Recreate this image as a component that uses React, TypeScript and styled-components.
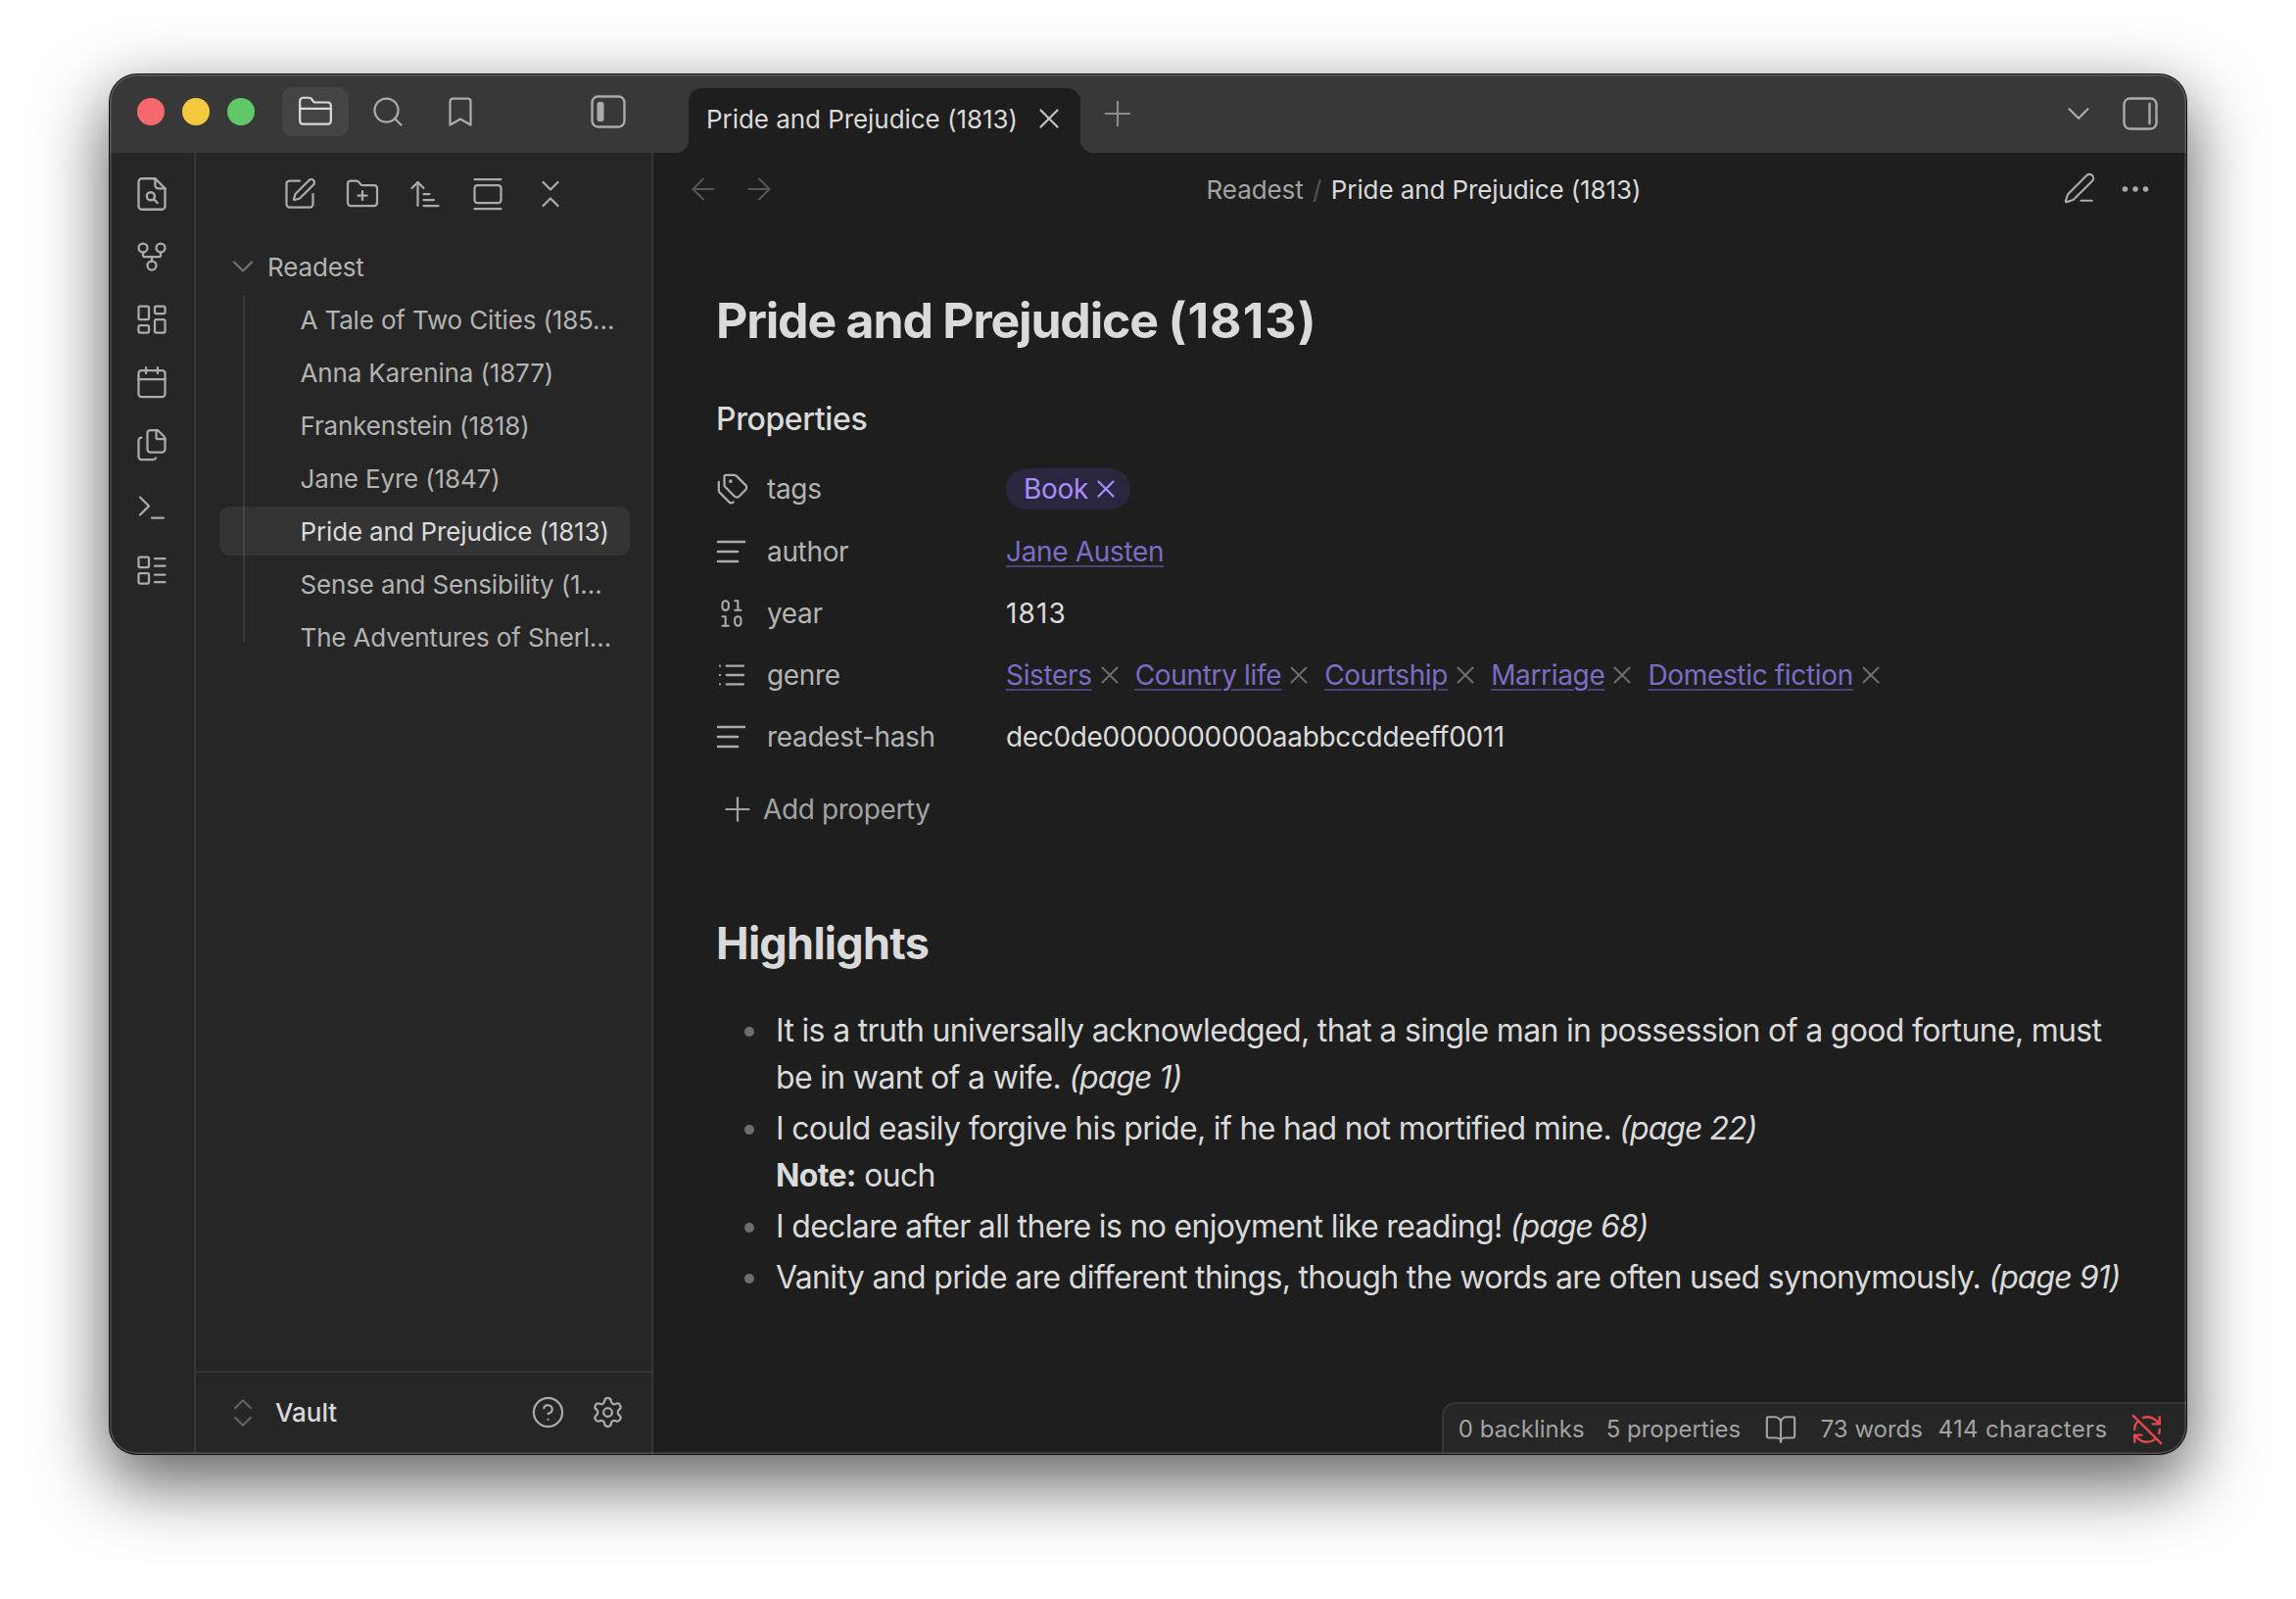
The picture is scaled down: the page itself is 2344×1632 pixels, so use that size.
import { Fragment } from 'react';
import styled, { createGlobalStyle } from 'styled-components';
import {
  ArrowLeft, ArrowRight, ArrowUpNarrowWide, Binary, BookOpen, Bookmark, Calendar, ChevronDown,
  ChevronsDownUp, ChevronsUpDown, CircleHelp, Ellipsis, Files, FolderClosed, FolderPlus,
  GalleryVertical, GitFork, LayoutDashboard, LayoutList, List, PenLine, Plus, RefreshCwOff,
  Search, Settings, SquarePen, Tags, Terminal, X,
} from 'lucide-react';

const GlobalStyle = createGlobalStyle`
  html, body { margin: 0; padding: 0; background: #fff; }
  body { font-family: Inter, "Liberation Sans", sans-serif; -webkit-font-smoothing: antialiased; }
  * { box-sizing: border-box; }
`;

const Stage = styled.div`
  width: 2344px;
  height: 1632px;
  padding: 76px 0 0 112px;
  overflow: hidden;
`;

const Window = styled.div`
  position: relative;
  width: 2120px;
  height: 1408px;
  display: flex;
  flex-direction: column;
  border-radius: 28px;
  overflow: hidden;
  background: #1e1e1e;
  box-shadow: 0 0 0 1px #111, 0 26px 70px 4px rgba(0, 0, 0, 0.62);

  &::after {
    content: '';
    position: absolute;
    inset: 0;
    border-radius: 28px;
    box-shadow: inset 0 0 0 1.5px rgba(255, 255, 255, 0.2);
    pointer-events: none;
  }
`;

const TitleBar = styled.div`
  height: 80px;
  flex: none;
  display: flex;
  align-items: center;
  background: #383838;
  color: #ababab;
`;

const Lights = styled.div`
  display: flex;
  gap: 18px;
  margin: 0 25px 4px 28px;
`;

const Light = styled.span<{ $color: string }>`
  width: 28px;
  height: 28px;
  border-radius: 50%;
  background: ${(p) => p.$color};
`;

const BarButton = styled.div<{ $active?: boolean }>`
  width: 68px;
  height: 50px;
  margin: 0 3px 4px;
  display: flex;
  align-items: center;
  justify-content: center;
  border-radius: 10px;
  color: ${(p) => (p.$active ? '#dadada' : '#ababab')};
  background: ${(p) => (p.$active ? '#444444' : 'transparent')};
`;

const ToggleButton = styled(BarButton)`
  margin-left: 80px;
`;

const Tab = styled.div`
  position: relative;
  align-self: flex-end;
  width: 400px;
  height: 66px;
  margin-left: 45px;
  padding: 0 18px 4px;
  display: flex;
  align-items: center;
  justify-content: space-between;
  background: #1e1e1e;
  border-radius: 14px 14px 0 0;
  color: #dadada;
  font-size: 26px;
  letter-spacing: -0.002em;
  white-space: nowrap;

  &::before,
  &::after {
    content: '';
    position: absolute;
    bottom: 0;
    width: 14px;
    height: 14px;
  }
  &::before {
    left: -14px;
    background: radial-gradient(circle at 0 0, #383838 14px, #1e1e1e 14.5px);
  }
  &::after {
    right: -14px;
    background: radial-gradient(circle at 100% 0, #383838 14px, #1e1e1e 14.5px);
  }
`;

const TabClose = styled.span`
  display: flex;
  color: #c4c4c4;
  margin-right: -3px;
`;

const NewTab = styled.div`
  margin: 0 0 0 17px;
  display: flex;
  width: 42px;
  justify-content: center;
  color: #8c8c8c;
`;

const BarRight = styled.div`
  margin-left: auto;
  margin-right: 29px;
  display: flex;
  align-items: center;
  gap: 26px;
`;

const Body = styled.div`
  flex: 1;
  min-height: 0;
  display: flex;
`;

const Ribbon = styled.div`
  width: 88px;
  flex: none;
  padding-top: 10px;
  display: flex;
  flex-direction: column;
  align-items: center;
  background: #262626;
  border-right: 2px solid #363636;
  color: #ababab;
`;

const RibbonSlot = styled.div`
  height: 64px;
  flex: none;
  display: flex;
  align-items: center;
  justify-content: center;
`;

const Sidebar = styled.div`
  width: 467px;
  flex: none;
  display: flex;
  flex-direction: column;
  background: #262626;
  border-right: 2px solid #363636;
`;

const SideTools = styled.div`
  height: 84px;
  flex: none;
  padding-left: 2px;
  display: flex;
  align-items: center;
  justify-content: center;
  color: #ababab;
`;

const SideTool = styled.div`
  width: 64px;
  display: flex;
  justify-content: center;
`;

const Tree = styled.div`
  padding: 7px 22px 0 24px;
  font-size: 26px;
  letter-spacing: -0.006em;
`;

const TreeFolder = styled.div`
  height: 50px;
  margin-bottom: 4px;
  display: flex;
  align-items: center;
  gap: 7px;
  padding-left: 6px;
  color: #b3b3b3;
`;

const FolderChevron = styled.span`
  display: flex;
  color: #6e6e6e;
`;

const TreeChildren = styled.div`
  position: relative;

  &::before {
    content: '';
    position: absolute;
    left: 24px;
    top: 0;
    bottom: 20px;
    width: 2px;
    background: rgba(255, 255, 255, 0.09);
  }
`;

const TreeItem = styled.div<{ $active?: boolean }>`
  height: 50px;
  margin-bottom: 4px;
  padding-left: 82.5px;
  display: flex;
  align-items: center;
  border-radius: 10px;
  white-space: nowrap;
  color: ${(p) => (p.$active ? '#dadada' : '#b3b3b3')};
  background: ${(p) => (p.$active ? '#343434' : 'transparent')};
`;

const VaultBar = styled.div`
  margin-top: auto;
  height: 85px;
  flex: none;
  padding: 0 14px 2px 29px;
  display: flex;
  align-items: center;
  border-top: 2px solid #363636;
  color: #ababab;
`;

const VaultChevrons = styled.span`
  display: flex;
  color: #626262;
`;

const VaultName = styled.span`
  margin: 0 auto 0 14px;
  font-size: 26px;
  font-weight: 500;
  color: #dadada;
`;

const VaultAction = styled.span`
  width: 61px;
  display: flex;
  justify-content: center;
`;

const Main = styled.div`
  flex: 1;
  min-width: 0;
  display: flex;
  flex-direction: column;
`;

const ViewHeader = styled.div`
  height: 74px;
  flex: none;
  display: grid;
  grid-template-columns: 1fr auto 1fr;
  align-items: center;
`;

const NavArrows = styled.div`
  padding-left: 22px;
  display: flex;
  color: #565656;
`;

const ViewActions = styled.div`
  padding-right: 24px;
  display: flex;
  justify-content: flex-end;
  color: #ababab;
`;

const HeaderSlot = styled.div`
  width: 57px;
  display: flex;
  justify-content: center;
`;

const Crumbs = styled.div`
  margin-left: 8px;
  display: flex;
  align-items: center;
  gap: 9.5px;
  font-size: 26px;
  letter-spacing: -0.004em;
  color: #dadada;
  white-space: nowrap;
`;

const CrumbParent = styled.span`
  color: #a3a3a3;
`;

const CrumbSep = styled.span`
  color: #555;
`;

const Note = styled.div`
  padding: 68px 65px 0 64px;
  color: #dadada;
`;

const NoteTitle = styled.h1`
  margin: 0;
  font-size: 50px;
  line-height: 58px;
  font-weight: 700;
  letter-spacing: -0.024em;
`;

const TitleYear = styled.span`
  letter-spacing: 0.022em;
`;

const PropsHeading = styled.div`
  margin: 52px 0 18.5px;
  font-size: 32px;
  line-height: 40px;
  font-weight: 500;
  letter-spacing: -0.012em;
`;

const PropRow = styled.div<{ $tall?: boolean }>`
  height: ${(p) => (p.$tall ? '65px' : '63px')};
  display: flex;
  align-items: center;
  font-size: 28px;
  letter-spacing: -0.012em;
`;

const PropIcon = styled.span`
  width: 52px;
  flex: none;
  display: flex;
  color: #ababab;
`;

const YearIcon = styled(Binary)`
  margin-left: -3px;
`;

const PropKey = styled.span`
  width: 244px;
  flex: none;
  color: #b3b3b3;
`;

const PropValue = styled.span`
  color: #dadada;
`;

const YearValue = styled(PropValue)`
  letter-spacing: 0.04em;
`;

const TagPill = styled.span`
  height: 42px;
  padding: 0 10px 0 18px;
  display: flex;
  align-items: center;
  gap: 3px;
  border-radius: 21px;
  background: #2a2640;
  color: #a88ef9;
`;

const ValueLinks = styled.div`
  display: flex;
  align-items: center;
`;

const InternalLink = styled.span`
  color: #7b6cc4;
  text-decoration: underline;
  text-decoration-color: #4b4279;
  text-decoration-thickness: 2px;
  text-underline-offset: 4px;
`;

const LinkRemove = styled.span`
  display: flex;
  width: 44px;
  padding-left: 3px;
  color: #6e6e6e;
`;

const AddProperty = styled.div`
  height: 84px;
  padding-left: 2px;
  display: flex;
  align-items: center;
  gap: 6px;
  font-size: 28px;
  letter-spacing: -0.014em;
  color: #a3a3a3;
`;

const Heading = styled.h2`
  margin: 70px 0 40px;
  font-size: 45px;
  line-height: 50px;
  font-weight: 700;
  letter-spacing: -0.016em;
`;

const Bullets = styled.ul`
  margin: 0;
  padding: 0;
  list-style: none;
`;

const BulletItem = styled.li`
  padding-left: 61px;
  margin-bottom: 4px;
  font-size: 32px;
  line-height: 48px;
  letter-spacing: -0.021em;

  &::before {
    content: '';
    display: inline-block;
    width: 10px;
    height: 10px;
    margin-left: -32px;
    margin-right: 22px;
    vertical-align: 5px;
    border-radius: 50%;
    background: #6e6e6e;
  }

  em { font-style: italic; letter-spacing: -0.03em; }
  strong { font-weight: 700; }
`;

const StatusBar = styled.div`
  position: absolute;
  right: 0;
  bottom: 0;
  height: 53px;
  padding: 0 23px 0 15px;
  display: flex;
  align-items: center;
  background: #262626;
  border: 2px solid #363636;
  border-width: 2px 0 0 2px;
  border-top-left-radius: 14px;
  font-size: 24px;
  color: #a3a3a3;
  white-space: nowrap;
`;

const StatusText = styled.span<{ $gap: number; $tracking?: string }>`
  margin-right: ${(p) => p.$gap}px;
  letter-spacing: ${(p) => p.$tracking ?? 'normal'};
`;

const StatusIcon = styled.span<{ $gap: number; $color?: string }>`
  display: flex;
  margin-right: ${(p) => p.$gap}px;
  color: ${(p) => p.$color ?? 'inherit'};
`;

const SidebarLeftIcon = () => (
  <svg width="36" height="34" viewBox="0 0 36 34" fill="none" stroke="currentColor" strokeWidth="2.4">
    <rect x="1.5" y="1.5" width="33" height="31" rx="6" />
    <rect x="6.5" y="7" width="7" height="20" rx="2.5" fill="currentColor" stroke="none" />
  </svg>
);

const SidebarRightIcon = () => (
  <svg width="36" height="34" viewBox="0 0 36 34" fill="none" stroke="currentColor" strokeWidth="2.4">
    <rect x="1.5" y="1.5" width="33" height="31" rx="6" />
    <line x1="27.5" y1="7" x2="27.5" y2="27" strokeLinecap="round" />
  </svg>
);

const FileSearchIcon = () => (
  <svg width="32" height="36" viewBox="0 0 28 32" fill="none" stroke="currentColor" strokeWidth="2.1" strokeLinejoin="round" strokeLinecap="round">
    <path d="M17 2H5a3 3 0 0 0-3 3v22a3 3 0 0 0 3 3h18a3 3 0 0 0 3-3V11z" />
    <path d="M17 2v6a3 3 0 0 0 3 3h6" />
    <circle cx="13" cy="18" r="3.6" />
    <path d="m16 21 3 3" />
  </svg>
);

const TextLinesIcon = () => (
  <svg width="30" height="26" viewBox="0 0 30 26" fill="none" stroke="currentColor" strokeWidth="2.6" strokeLinecap="round">
    <path d="M2 3h27" />
    <path d="M2 13h20" />
    <path d="M2 23h20" />
  </svg>
);

const titles = [
  'A Tale of Two Cities (185…',
  'Anna Karenina (1877)',
  'Frankenstein (1818)',
  'Jane Eyre (1847)',
  'Pride and Prejudice (1813)',
  'Sense and Sensibility (1…',
  'The Adventures of Sherl…',
];

const genres = ['Sisters', 'Country life', 'Courtship', 'Marriage', 'Domestic fiction'];

const ribbonIcons = [GitFork, LayoutDashboard, Calendar, Files, Terminal, LayoutList];

const sideTools = [SquarePen, FolderPlus, ArrowUpNarrowWide, GalleryVertical, ChevronsDownUp];

export default function App() {
  return (
    <Stage>
      <GlobalStyle />
      <Window>
        <TitleBar>
          <Lights>
            <Light $color="#f5686b" />
            <Light $color="#f5c93f" />
            <Light $color="#62c766" />
          </Lights>
          <BarButton $active><FolderClosed size={38} strokeWidth={1.4} /></BarButton>
          <BarButton><Search size={36} strokeWidth={1.5} /></BarButton>
          <BarButton><Bookmark size={36} strokeWidth={1.5} /></BarButton>
          <ToggleButton><SidebarLeftIcon /></ToggleButton>
          <Tab>
            Pride and Prejudice (1813)
            <TabClose><X size={34} strokeWidth={1.5} /></TabClose>
          </Tab>
          <NewTab><Plus size={42} strokeWidth={1.2} /></NewTab>
          <BarRight>
            <ChevronDown size={38} strokeWidth={1.4} />
            <SidebarRightIcon />
          </BarRight>
        </TitleBar>
        <Body>
          <Ribbon>
            <RibbonSlot><FileSearchIcon /></RibbonSlot>
            {ribbonIcons.map((Icon, i) => (
              <RibbonSlot key={i}><Icon size={36} strokeWidth={1.5} /></RibbonSlot>
            ))}
          </Ribbon>
          <Sidebar>
            <SideTools>
              {sideTools.map((Icon, i) => (
                <SideTool key={i}><Icon size={36} strokeWidth={1.5} /></SideTool>
              ))}
            </SideTools>
            <Tree>
              <TreeFolder>
                <FolderChevron><ChevronDown size={36} strokeWidth={1.6} /></FolderChevron>
                Readest
              </TreeFolder>
              <TreeChildren>
                {titles.map((t, i) => (
                  <TreeItem key={t} $active={i === 4}>{t}</TreeItem>
                ))}
              </TreeChildren>
            </Tree>
            <VaultBar>
              <VaultChevrons><ChevronsUpDown size={38} strokeWidth={1.4} /></VaultChevrons>
              <VaultName>Vault</VaultName>
              <VaultAction><CircleHelp size={35} strokeWidth={1.5} /></VaultAction>
              <VaultAction><Settings size={35} strokeWidth={1.5} /></VaultAction>
            </VaultBar>
          </Sidebar>
          <Main>
            <ViewHeader>
              <NavArrows>
                <HeaderSlot><ArrowLeft size={36} strokeWidth={1.3} /></HeaderSlot>
                <HeaderSlot><ArrowRight size={36} strokeWidth={1.3} /></HeaderSlot>
              </NavArrows>
              <Crumbs>
                <CrumbParent>Readest</CrumbParent>
                <CrumbSep>/</CrumbSep>
                Pride and Prejudice (1813)
              </Crumbs>
              <ViewActions>
                <HeaderSlot><PenLine size={34} strokeWidth={1.5} /></HeaderSlot>
                <HeaderSlot><Ellipsis size={36} strokeWidth={1.7} /></HeaderSlot>
              </ViewActions>
            </ViewHeader>
            <Note>
              <NoteTitle>Pride and Prejudice <TitleYear>(1813)</TitleYear></NoteTitle>
              <PropsHeading>Properties</PropsHeading>
              <PropRow $tall>
                <PropIcon><Tags size={34} strokeWidth={1.6} /></PropIcon>
                <PropKey>tags</PropKey>
                <TagPill>Book <X size={30} strokeWidth={1.7} /></TagPill>
              </PropRow>
              <PropRow>
                <PropIcon><TextLinesIcon /></PropIcon>
                <PropKey>author</PropKey>
                <InternalLink>Jane Austen</InternalLink>
              </PropRow>
              <PropRow>
                <PropIcon><YearIcon size={38} strokeWidth={1.3} /></PropIcon>
                <PropKey>year</PropKey>
                <YearValue>1813</YearValue>
              </PropRow>
              <PropRow>
                <PropIcon><List size={32} strokeWidth={1.7} /></PropIcon>
                <PropKey>genre</PropKey>
                <ValueLinks>
                  {genres.map((g) => (
                    <Fragment key={g}>
                      <InternalLink>{g}</InternalLink>
                      <LinkRemove><X size={30} strokeWidth={1.6} /></LinkRemove>
                    </Fragment>
                  ))}
                </ValueLinks>
              </PropRow>
              <PropRow>
                <PropIcon><TextLinesIcon /></PropIcon>
                <PropKey>readest-hash</PropKey>
                <PropValue>dec0de0000000000aabbccddeeff0011</PropValue>
              </PropRow>
              <AddProperty>
                <Plus size={40} strokeWidth={1.3} />
                Add property
              </AddProperty>
              <Heading>Highlights</Heading>
              <Bullets>
                <BulletItem>
                  It is a truth universally acknowledged, that a single man in possession of a good fortune, must be in want of a wife. <em>(page 1)</em>
                </BulletItem>
                <BulletItem>
                  I could easily forgive his pride, if he had not mortified mine. <em>(page 22)</em>
                  <br />
                  <strong>Note:</strong> ouch
                </BulletItem>
                <BulletItem>
                  I declare after all there is no enjoyment like reading! <em>(page 68)</em>
                </BulletItem>
                <BulletItem>
                  Vanity and pride are different things, though the words are often used synonymously. <em>(page 91)</em>
                </BulletItem>
              </Bullets>
            </Note>
          </Main>
        </Body>
        <StatusBar>
          <StatusText $gap={22}>0 backlinks</StatusText>
          <StatusText $gap={23.5}>5 properties</StatusText>
          <StatusIcon $gap={24}><BookOpen size={34} strokeWidth={1.5} /></StatusIcon>
          <StatusText $gap={15.5}>73 words</StatusText>
          <StatusText $gap={23.5} $tracking="0.015em">414 characters</StatusText>
          <StatusIcon $gap={0} $color="#e5484d"><RefreshCwOff size={34} strokeWidth={1.7} /></StatusIcon>
        </StatusBar>
      </Window>
    </Stage>
  );
}
